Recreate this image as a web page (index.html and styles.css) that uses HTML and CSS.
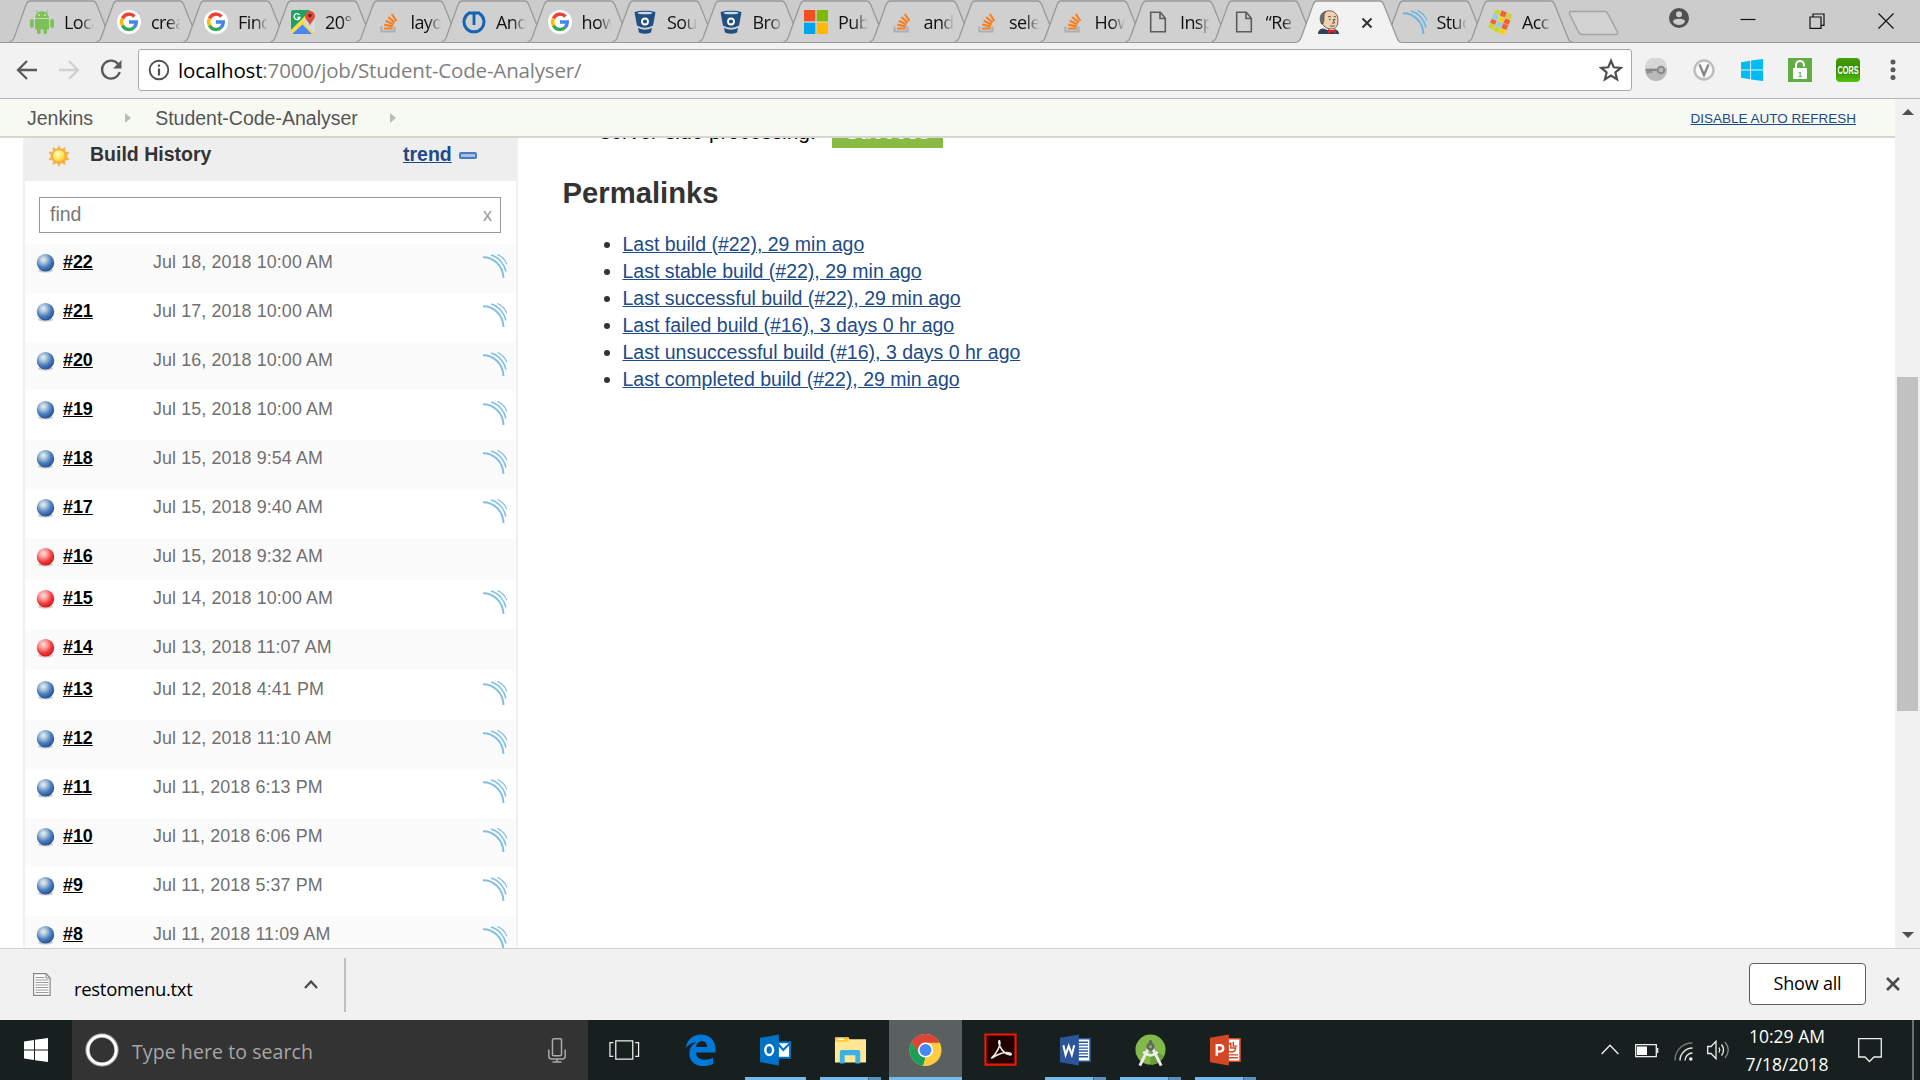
FILE: index.html
```html
<!DOCTYPE html>
<html lang="en">
<head>
<meta charset="utf-8">
<title>Student-Code-Analyser [Jenkins]</title>
<link rel="stylesheet" href="styles.css">
</head>
<body>
<svg class="defs" width="0" height="0" aria-hidden="true">
  <defs>
    <radialGradient id="gBlue" cx=".38" cy=".32" r=".68"><stop offset="0" stop-color="#eef1e4"/><stop offset=".3" stop-color="#a9c3dd"/><stop offset=".65" stop-color="#4c7fbd"/><stop offset="1" stop-color="#24539a"/></radialGradient>
    <radialGradient id="gRed" cx=".38" cy=".32" r=".68"><stop offset="0" stop-color="#ffe1e1"/><stop offset=".35" stop-color="#f99"/><stop offset=".7" stop-color="#f03a3a"/><stop offset="1" stop-color="#d81c1c"/></radialGradient>
    <radialGradient id="gSun" cx=".4" cy=".35" r=".7"><stop offset="0" stop-color="#fffbd0"/><stop offset=".6" stop-color="#ffe34d"/><stop offset="1" stop-color="#f9b82a"/></radialGradient>
    <linearGradient id="gCors" x1="0" y1="0" x2="0" y2="1"><stop offset="0" stop-color="#4a9f07"/><stop offset=".5" stop-color="#2f8a00"/><stop offset="1" stop-color="#55c40a"/></linearGradient>
  </defs>
  <symbol id="tab" viewBox="0 0 106 43"><path d="M0.5 42C4 41 4 40 5 38L17 5Q18.500 1 21 1H84Q86 1 87.500 4L101 38Q102.500 42 105.500 42Z" fill="#d0d0d0"/><path d="M0.5 42C4 41 4 40 5 38L17 5Q18.500 1 21 1H84Q86 1 87.500 4L101 38Q102.500 42 105.500 42" fill="none" stroke="#999" stroke-width="1.300"/></symbol>
  <symbol id="tab-on" viewBox="0 0 106 43"><path d="M0 43V42.500C4 41 4 40 5 38L17 5Q18.500 1 21 1H84Q86 1 87.500 4L101 38Q102.500 42 106 42.500V43Z" fill="#f2f2f2"/><path d="M0.500 42.500C4 41 4 40 5 38L17 5Q18.500 1 21 1H84Q86 1 87.500 4L101 38Q102.500 42 105.500 42.500" fill="none" stroke="#999" stroke-width="1.300"/></symbol>
  <symbol id="android" viewBox="0 0 24 24"><g fill="#7dc257"><path d="M5 8a7 6.800 0 0 1 14 0z"/><path d="M5 9h14v9.500a1 1 0 0 1-1 1H6a1 1 0 0 1-1-1z"/><rect x="0" y="9" width="3.800" height="9" rx="1.900"/><rect x="20.200" y="9" width="3.800" height="9" rx="1.900"/><rect x="7" y="17" width="3.600" height="7" rx="1.500"/><rect x="13.400" y="17" width="3.600" height="7" rx="1.500"/></g><path d="M6.500.5l2 3M17.500.5l-2 3" stroke="#7dc257"/><circle cx="9" cy="5" r=".8" fill="#fff"/><circle cx="15" cy="5" r=".8" fill="#fff"/></symbol>
  <symbol id="google" viewBox="0 0 24 24"><circle cx="12" cy="12" r="12" fill="#fff"/><g fill="none" stroke-width="3.400"><path d="M17.500 6.500A7.300 7.300 0 0 0 5.500 8.500" stroke="#ea4335"/><path d="M5.500 8.500a7.300 7.300 0 0 0 0 7" stroke="#fbbc05"/><path d="M5.500 15.500A7.300 7.300 0 0 0 17 17.500" stroke="#34a853"/><path d="M17 17.500A7.300 7.300 0 0 0 19.300 12H12" stroke="#4285f4"/></g></symbol>
  <symbol id="maps" viewBox="0 0 24 24"><path d="M2 0h17l-17 21H0V2a2 2 0 0 1 2-2z" fill="#1ea362"/><path d="M12 12L24 9V22H12z" fill="#d9d9d9"/><path d="M1 24L12 12.500 23 24z" fill="#4a86f5"/><path d="M0 20L20 0l2 2L12 12.500 24 24h-3L11.500 14.500 1 24H0z" fill="#ffd94a"/><path d="M14 6a5 5 0 0 1 10 0c0 4-4 5-5 10-1-5-5-6-5-10z" fill="#dd4b3e"/><circle cx="19" cy="5.500" r="1.800" fill="#70231c"/><path d="M8.500 4.800A3 3 0 1 0 9 7.500H6.200" fill="none" stroke="#fff" stroke-width="1.300"/></symbol>
  <symbol id="stack" viewBox="0 0 24 24"><path d="M4.500 16.500v5h13v-5" fill="none" stroke="#aab0b7" stroke-width="2.200"/><g stroke="#f48024" stroke-width="2.200"><path d="M7 18.500h8.500M7.300 14.700l8.500 1.800M8.700 10.700l7.800 3.800M11.200 7l6.500 5.600M14.800 4l4.600 7"/></g></symbol>
  <symbol id="power" viewBox="0 0 24 24"><path d="M6.500 3.500a10 10 0 1 0 11 0" fill="none" stroke="#1464b4" stroke-width="3"/><path d="M6 3h12M12 3v12" stroke="#1464b4" stroke-width="2.800"/></symbol>
  <symbol id="bucket" viewBox="0 0 24 24"><path d="M1.500 2.500C2 0 22 0 22.500 2.500L20 15.500Q12 20 4 15.500z" fill="#205081"/><path d="M5 18q7 3.500 14 0l-1 4.500q-6 2.500-12 0z" fill="#205081"/><ellipse cx="12" cy="3" rx="7.500" ry="1.300" fill="#d0d8e0"/><circle cx="12" cy="11.500" r="3" fill="none" stroke="#fff" stroke-width="1.800"/></symbol>
  <symbol id="ms" viewBox="0 0 24 24"><path fill="#f25022" d="M0 0h11.300v11.300H0z"/><path fill="#7fba00" d="M12.700 0H24v11.300H12.700z"/><path fill="#00a4ef" d="M0 12.700h11.300V24H0z"/><path fill="#ffb900" d="M12.700 12.700H24V24H12.700z"/></symbol>
  <symbol id="page" viewBox="0 0 24 24"><path d="M4.700 2.200h9.600l5 6v13.600H4.700zM14 2.500v6h5" fill="none" stroke="#5c5c5c" stroke-width="1.600"/></symbol>
  <symbol id="butler" viewBox="0 0 24 24"><path d="M1 24q0-5 5-5.500l6 2 6-1q4 .5 4 4.500z" fill="#2c4256"/><path d="M7 17l5 4 6-2v-4H7z" fill="#fff"/><path d="M5 8C5 3 8 .8 12.500 .8S21 4 21 10.500c0 5-2 8.500-6.500 8.500-5 0-9-3-9.500-7z" fill="#efd0b0" stroke="#4a4038" stroke-width=".8"/><path d="M4.500 14C2 9 3 4 7 2l2-.8Q6.500 4 7 7t-1 7z" fill="#6f6b66" stroke="#4a4038" stroke-width=".6"/><path d="M11 7q1.500-1 3 0m2.500 0q1.500-1 2.500 0M12 9.500h1.500m3.500 0h1.500M16 9l1.500 4h-2.500m-2 2.800q2.500 .8 4.500 0" stroke="#4a4038" fill="none" stroke-width=".9"/><path d="M11 19l4 1.500 4-1.500v4.500L15 22l-4 1.800z" fill="#e01f26"/></symbol>
  <symbol id="sonar" viewBox="0 0 24 24"><g fill="none" stroke="#6cb4e0"><path d="M0 3.200C10 3 20 11 20.500 24" stroke-width="2"/><path d="M8 1C15.500 3 21.500 10 23 17.500" stroke-width="1.500"/><path d="M14.500.4C19 2.500 22.500 6.500 24 10.500" stroke-width="1.200"/></g></symbol>
  <symbol id="mosaic" viewBox="0 0 24 24"><g transform="rotate(22 12 12)"><path fill="#cdd62c" d="M3 .5h5.500V6H3zM3 17h5.500v4.500H3z"/><path fill="#f4632a" d="M9.300.5h5.500V6H9.300zM15.500 12H21v5h-5.500zM3 12h5.500v4.500H3z"/><path fill="#cdd62c" d="M15.500.5H21v5h-5.500z"/><path fill="#8fd0e4" d="M3 6.500h5.500v5H3zM9.300 12h5.500v5H9.300z"/><path fill="#fbd00c" d="M9.300 6.500h5.500v5H9.300zM15.500 17.500H21v5h-5.500z"/><path fill="#f4632a" d="M15.500 6.500H21v5h-5.500z"/><path fill="#cdd62c" d="M9.300 17.500h5.500v5H9.300z"/></g></symbol>
  <symbol id="winflag" viewBox="0 0 24 24"><path d="M0 3.500L10 2v9.500H0zM11 1.800L24 0v11.500H11zM0 12.500h10V22L0 20.500zM11 12.500h13V24l-13-1.800z"/></symbol>
  <symbol id="blue" viewBox="0 0 20 20"><ellipse cx="10" cy="18" rx="8" ry="2" fill="#ccc"/><circle cx="10" cy="9.700" r="9.200" fill="url(#gBlue)"/></symbol>
  <symbol id="red" viewBox="0 0 20 20"><ellipse cx="10" cy="18" rx="8" ry="2" fill="#ccc"/><circle cx="10" cy="9.700" r="9.200" fill="url(#gRed)"/></symbol>
  <symbol id="sun" viewBox="0 0 22 22"><path d="M11 0l2 4 4.500-2L17 6.500l4.500.5-2.500 4 2.500 4-4.500.5.500 4.500-4.500-2-2 4-2-4-4.500 2L5 15.500.5 15 3 11 .5 7 5 6.500 4.500 2 9 4z" fill="#f7b253"/><circle cx="11" cy="11" r="6.500" fill="url(#gSun)" stroke="#f5a73b"/></symbol>
</svg>

<header class="tabstrip">
  <nav class="tabs">
    <div class="tab wide"><svg class="shape"><use href="#tab"/></svg><svg class="fav"><use href="#android"/></svg><span>Loca</span></div>
    <div class="tab wide"><svg class="shape"><use href="#tab"/></svg><svg class="fav"><use href="#google"/></svg><span>crea</span></div>
    <div class="tab wide"><svg class="shape"><use href="#tab"/></svg><svg class="fav"><use href="#google"/></svg><span>Find</span></div>
    <div class="tab"><svg class="shape"><use href="#tab"/></svg><svg class="fav"><use href="#maps"/></svg><span>20°</span></div>
    <div class="tab"><svg class="shape"><use href="#tab"/></svg><svg class="fav"><use href="#stack"/></svg><span>layo</span></div>
    <div class="tab"><svg class="shape"><use href="#tab"/></svg><svg class="fav"><use href="#power"/></svg><span>And</span></div>
    <div class="tab"><svg class="shape"><use href="#tab"/></svg><svg class="fav"><use href="#google"/></svg><span>how</span></div>
    <div class="tab"><svg class="shape"><use href="#tab"/></svg><svg class="fav"><use href="#bucket"/></svg><span>Sou</span></div>
    <div class="tab"><svg class="shape"><use href="#tab"/></svg><svg class="fav"><use href="#bucket"/></svg><span>Bro</span></div>
    <div class="tab"><svg class="shape"><use href="#tab"/></svg><svg class="fav"><use href="#ms"/></svg><span>Pub</span></div>
    <div class="tab"><svg class="shape"><use href="#tab"/></svg><svg class="fav"><use href="#stack"/></svg><span>and</span></div>
    <div class="tab"><svg class="shape"><use href="#tab"/></svg><svg class="fav"><use href="#stack"/></svg><span>sele</span></div>
    <div class="tab"><svg class="shape"><use href="#tab"/></svg><svg class="fav"><use href="#stack"/></svg><span>How</span></div>
    <div class="tab"><svg class="shape"><use href="#tab"/></svg><svg class="fav"><use href="#page"/></svg><span>Insp</span></div>
    <div class="tab"><svg class="shape"><use href="#tab"/></svg><svg class="fav"><use href="#page"/></svg><span>“Re</span></div>
    <div class="tab active"><svg class="shape"><use href="#tab-on"/></svg><svg class="fav"><use href="#butler"/></svg><svg class="tabx" viewBox="0 0 12 12"><path d="M1.500 1.500l9 9m0-9l-9 9" stroke="#333" stroke-width="2"/></svg></div>
    <div class="tab"><svg class="shape"><use href="#tab"/></svg><svg class="fav"><use href="#sonar"/></svg><span>Stud</span></div>
    <div class="tab"><svg class="shape"><use href="#tab"/></svg><svg class="fav"><use href="#mosaic"/></svg><span>Acc</span></div>
  </nav>
  <svg class="newtab" viewBox="0 0 52 26"><path d="M3 1.500H37Q39 1.500 40 4L49.500 22Q50 24.500 48 24.500H14Q11.500 24.500 10.500 22L1.500 4Q1 1.500 3 1.500z" fill="#d2d2d2" stroke="#a3a3a3" stroke-width="1.500"/></svg>
  <div class="winctl">
    <svg class="user" viewBox="0 0 20 20"><circle cx="10" cy="10" r="10" fill="#505050"/><circle cx="10" cy="6.200" r="3" fill="#ccc"/><path d="M4 13.800q0-3 6-3t6 3q-2 3.200-6 3.200t-6-3.200z" fill="#ccc"/></svg>
    <svg viewBox="0 0 16 16"><path d="M.5 6.500h15" stroke="#111" stroke-width="1.200"/></svg>
    <svg viewBox="0 0 16 16"><path d="M1 4h11v11.400H1zM4 4V1h11v11.400h-3" fill="none" stroke="#111" stroke-width="1.200"/></svg>
    <svg viewBox="0 0 16 16"><path d="M.5.5l15 15m0-15l-15 15" stroke="#111" stroke-width="1.200"/></svg>
  </div>
</header>

<div class="toolbar">
  <svg class="back" viewBox="0 0 22 22"><path d="M21 11H2.500M11 2l-9 9 9 9" fill="none" stroke="#5a5a5a" stroke-width="2.300"/></svg>
  <svg class="fwd" viewBox="0 0 22 22"><path d="M1 11h18.500M11 2l9 9-9 9" fill="none" stroke="#d0d0d0" stroke-width="2.300"/></svg>
  <svg class="reload" viewBox="0 0 22 22"><path d="M18.500 5.500A9 9 0 1 0 19.700 13" fill="none" stroke="#5a5a5a" stroke-width="2.300"/><path d="M21.500 1v8.500h-8.500z" fill="#5a5a5a"/></svg>
  <div class="omnibox">
    <svg class="info" viewBox="0 0 22 22"><circle cx="11" cy="11" r="9.300" fill="none" stroke="#505050" stroke-width="1.900"/><path d="M11 9.500v7M11 5.500v2.200" stroke="#505050" stroke-width="2.200"/></svg>
    <p class="url"><b>localhost</b>:7000/job/Student-Code-Analyser/</p>
    <svg class="star" viewBox="0 0 22 22"><path d="M11 2.500l2.500 6 6.500.5-5 4.300 1.600 6.300L11 16.100l-5.600 3.500L7 13.300 2 9l6.500-.5z" fill="none" stroke="#505050" stroke-width="2"/></svg>
  </div>
  <div class="exts">
    <svg viewBox="0 0 24 24"><circle cx="12" cy="12" r="11" fill="#b9b9b9"/><path d="M1 10a11 11 0 0 1 22 0z" fill="#d6d6d6"/><path d="M2 12h12M4 12v3.500M7 12v3" stroke="#888" stroke-width="2.200"/><circle cx="17" cy="12" r="3.300" fill="none" stroke="#888" stroke-width="2"/></svg>
    <svg viewBox="0 0 24 24"><circle cx="12" cy="12" r="9.500" fill="#f8f8f8" stroke="#bdbdbd" stroke-width="2.400"/><path d="M7.500 6.500L12 17l4.500-10.500" fill="none" stroke="#858585" stroke-width="2.300"/></svg>
    <svg class="azure" viewBox="-1 -1 26 26"><use href="#winflag" width="24" height="24"/></svg>
    <svg viewBox="0 0 24 24"><path fill="#62ad44" d="M0 0h24v24H0z"/><rect x="5" y="10" width="14" height="11" rx="1" fill="#fff"/><path d="M8 11V7a4 4 0 0 1 8 0v1.500" fill="none" stroke="#fff" stroke-width="2"/><text x="12" y="19" class="lock1">1</text></svg>
    <svg viewBox="0 0 24 24"><rect width="24" height="24" rx="4" fill="url(#gCors)"/><text x="12" y="16" class="cors" textLength="21" lengthAdjust="spacingAndGlyphs">CORS</text></svg>
  </div>
  <svg class="dots" viewBox="0 0 6 22"><circle cx="3" cy="3" r="2.500"/><circle cx="3" cy="10.800" r="2.500"/><circle cx="3" cy="18.600" r="2.500"/></svg>
</div>

<div class="viewport">
  <div class="page">
    <div class="crumbs">
      <a>Jenkins</a><i></i><a>Student-Code-Analyser</a><i></i>
      <a class="auto">DISABLE AUTO REFRESH</a>
    </div>
    <div class="content">
      <aside class="history">
        <div class="hhead"><svg class="sun"><use href="#sun"/></svg><b>Build History</b><a>trend</a><span class="pill"></span></div>
        <div class="find"><span>find</span><em>x</em></div>
        <div class="row"><svg class="ball"><use href="#blue"/></svg><a>#22</a><time>Jul 18, 2018 10:00 AM</time><svg class="wave"><use href="#sonar"/></svg></div>
        <div class="row"><svg class="ball"><use href="#blue"/></svg><a>#21</a><time>Jul 17, 2018 10:00 AM</time><svg class="wave"><use href="#sonar"/></svg></div>
        <div class="row"><svg class="ball"><use href="#blue"/></svg><a>#20</a><time>Jul 16, 2018 10:00 AM</time><svg class="wave"><use href="#sonar"/></svg></div>
        <div class="row"><svg class="ball"><use href="#blue"/></svg><a>#19</a><time>Jul 15, 2018 10:00 AM</time><svg class="wave"><use href="#sonar"/></svg></div>
        <div class="row"><svg class="ball"><use href="#blue"/></svg><a>#18</a><time>Jul 15, 2018 9:54 AM</time><svg class="wave"><use href="#sonar"/></svg></div>
        <div class="row"><svg class="ball"><use href="#blue"/></svg><a>#17</a><time>Jul 15, 2018 9:40 AM</time><svg class="wave"><use href="#sonar"/></svg></div>
        <div class="row short"><svg class="ball"><use href="#red"/></svg><a>#16</a><time>Jul 15, 2018 9:32 AM</time></div>
        <div class="row"><svg class="ball"><use href="#red"/></svg><a>#15</a><time>Jul 14, 2018 10:00 AM</time><svg class="wave"><use href="#sonar"/></svg></div>
        <div class="row short"><svg class="ball"><use href="#red"/></svg><a>#14</a><time>Jul 13, 2018 11:07 AM</time></div>
        <div class="row"><svg class="ball"><use href="#blue"/></svg><a>#13</a><time>Jul 12, 2018 4:41 PM</time><svg class="wave"><use href="#sonar"/></svg></div>
        <div class="row"><svg class="ball"><use href="#blue"/></svg><a>#12</a><time>Jul 12, 2018 11:10 AM</time><svg class="wave"><use href="#sonar"/></svg></div>
        <div class="row"><svg class="ball"><use href="#blue"/></svg><a>#11</a><time>Jul 11, 2018 6:13 PM</time><svg class="wave"><use href="#sonar"/></svg></div>
        <div class="row"><svg class="ball"><use href="#blue"/></svg><a>#10</a><time>Jul 11, 2018 6:06 PM</time><svg class="wave"><use href="#sonar"/></svg></div>
        <div class="row"><svg class="ball"><use href="#blue"/></svg><a>#9</a><time>Jul 11, 2018 5:37 PM</time><svg class="wave"><use href="#sonar"/></svg></div>
        <div class="row"><svg class="ball"><use href="#blue"/></svg><a>#8</a><time>Jul 11, 2018 11:09 AM</time><svg class="wave"><use href="#sonar"/></svg></div>
      </aside>
      <main>
        <p class="gate"><span>server-side processing:</span><b>Success</b></p>
        <h2>Permalinks</h2>
        <ul>
          <li><a>Last build (#22), 29 min ago</a></li>
          <li><a>Last stable build (#22), 29 min ago</a></li>
          <li><a>Last successful build (#22), 29 min ago</a></li>
          <li><a>Last failed build (#16), 3 days 0 hr ago</a></li>
          <li><a>Last unsuccessful build (#16), 3 days 0 hr ago</a></li>
          <li><a>Last completed build (#22), 29 min ago</a></li>
        </ul>
      </main>
    </div>
  </div>
  <div class="scroll"><svg viewBox="0 0 12 6"><path d="M6 0l6 6H0z"/></svg><span></span><svg viewBox="0 0 12 6"><path d="M0 0h12L6 6z"/></svg></div>
</div>

<div class="shelf">
  <svg class="doc" viewBox="0 0 18 23"><path d="M.6.6h12.500l4 4.400v17.300H.6z" fill="#fff" stroke="#888" stroke-width="1.200"/><path d="M13 .6V5h4" fill="none" stroke="#888"/><path d="M2.500 4.500h9M2.500 7h13M2.500 9.500h13M2.500 12h13M2.500 14.500h13M2.500 17h13M2.500 19.500h13" stroke="#999" stroke-width="1.100"/></svg>
  <span class="fname">restomenu.txt</span>
  <svg class="up" viewBox="0 0 14 9"><path d="M1 8l6-6.500L13 8" fill="none" stroke="#4a4a4a" stroke-width="2.300"/></svg>
  <span class="sep"></span>
  <button>Show all</button>
  <svg class="sx" viewBox="0 0 14 14"><path d="M1 1l12 12m0-12L1 13" stroke="#4a4a4a" stroke-width="2.500"/></svg>
</div>

<footer class="taskbar">
  <div class="start"><svg viewBox="0 0 24 24"><use href="#winflag"/></svg></div>
  <div class="search">
    <svg class="ring" viewBox="0 0 34 34"><circle cx="17" cy="17" r="14.500" fill="none" stroke="#8e8e8e" stroke-width="4.500"/><circle cx="17" cy="17" r="14.200" fill="none" stroke="#fff" stroke-width="3"/></svg>
    <span>Type here to search</span>
    <svg class="mic" viewBox="0 0 18 25"><rect x="4.500" y=".8" width="9" height="17" rx="1" fill="none" stroke="#aaa" stroke-width="1.500"/><path d="M.8 11.500V18q0 3 3 3h10.400q3 0 3-3v-6.500M9 21v3M4.500 24h9" fill="none" stroke="#aaa" stroke-width="1.500"/></svg>
  </div>
  <div class="apps">
    <div class="app"><svg viewBox="0 0 34 34"><path d="M8 7.500h17.500v19H8zM5.500 9.500H2v14h3.500M28 9.500h3.500v14H28" fill="none" stroke="#eee" stroke-width="1.300"/></svg></div>
    <div class="app"><svg viewBox="0 0 34 34"><path d="M1.800 15C3 6 9.500 1 17.500 1 27 1 32.500 8 32.500 16v3.500H12.300c.3 5 4.500 7.500 9.300 7.500 3.200 0 6-.8 8.400-2.300v6.800C27 33 23.500 33.600 20 33.600 11.500 33.600 5.500 28.500 5.500 20.500c0-5.500 3-9.500 7.500-11.500C9 8.900 4.500 11.500 1.800 15zM12.500 13.800h11.200c0-3-1.500-5.800-5.300-5.800-3.500 0-5.500 2.600-5.900 5.800z" fill="#0078d7"/></svg></div>
    <div class="app run"><svg viewBox="0 0 34 34"><path fill="#fff" stroke="#0072c6" stroke-width="2" d="M19 9h13v16H19z"/><path d="M19 10l6 7 7-7" fill="none" stroke="#0072c6" stroke-width="2.200"/><path d="M1 4.500L20.500 1v32L1 29.500z" fill="#0072c6"/><ellipse cx="10.500" cy="17" rx="4" ry="5.200" fill="none" stroke="#fff" stroke-width="2.500"/></svg></div>
    <div class="app run multi"><svg viewBox="0 0 34 34"><path d="M1 4h14l1 2h17v24H1z" fill="#ffe796"/><path d="M1 4h14v4.500H1z" fill="#fccb2f"/><path d="M4 6h6" stroke="#fff" stroke-width="1.500"/><path d="M6 31V19a2 2 0 0 1 2-2h17a2 2 0 0 1 2 2v12h-5v-8.500H11V31z" fill="#39b2ea"/></svg></div>
    <div class="app chrome"><svg viewBox="0 0 34 34"><circle cx="17" cy="17" r="16.500" fill="#ffcd40"/><path d="M2.700 8.800A16.500 16.500 0 0 1 31.700 9.500H17L10 21z" fill="#db4437"/><path d="M2.700 8.800L10.500 21 17 24.500l-2.500 8.800A16.500 16.500 0 0 1 2.700 8.800z" fill="#1ba05a"/><path d="M23.500 20.500L17 33.500h-2l2-9z" fill="#ffcd40"/><circle cx="17" cy="17" r="7.800" fill="#fff"/><circle cx="17" cy="17" r="6.200" fill="#4587f3"/></svg></div>
    <div class="app"><svg viewBox="0 0 34 34"><path d="M1.500 1h31v31h-31z" fill="#230000" stroke="#f01800" stroke-width="2.200"/><path d="M7.500 25.500C12 22 18 12 16 7.500c-2.500-1 1 13 10.500 14.500 4.500.3 0-4-9-1.500-5 1.500-10 5-10 5z" fill="none" stroke="#eee" stroke-width="1.600"/></svg></div>
    <div class="app run multi"><svg viewBox="0 0 34 34"><path d="M18 5.500h14v23H18z" fill="#fff" stroke="#2b579a" stroke-width="1.600"/><path d="M20 9h10M20 12h10M20 15h10M20 18h10M20 21h10M20 24h10" stroke="#2b579a" stroke-width="1.400"/><path d="M1 4.500L20.500 1v32L1 29.500z" fill="#2b579a"/><path d="M4.500 12l2.300 10 3.200-9 3.200 9 2.500-10" fill="none" stroke="#fff" stroke-width="2.100"/></svg></div>
    <div class="app run multi"><svg viewBox="0 0 34 34"><circle cx="17" cy="16.500" r="15.500" fill="#83b84a"/><path d="M17 13L31 24q-6 9-14 8z" fill="#6a9e3b"/><path d="M15.500 14L6 33M18.500 14L28 33" stroke="#eee" stroke-width="3"/><path d="M9.500 19q7.500 7 15 0" fill="none" stroke="#eee" stroke-width="2.600"/><path d="M15.500 7h3v4h-3z" fill="#666"/><circle cx="17" cy="13.500" r="3" fill="#83b84a" stroke="#666" stroke-width="2.500"/></svg></div>
    <div class="app run multi"><svg viewBox="0 0 34 34"><path d="M18 5.500h14v23H18z" fill="#fff" stroke="#d24726" stroke-width="1.600"/><path d="M22.500 10a4.500 4.500 0 1 0 5 5h-5zM25 8.500v4.500h4" fill="none" stroke="#d24726" stroke-width="1.500"/><path d="M20 22h10M20 25h10" stroke="#d24726" stroke-width="1.500"/><path d="M1 4.500L20.500 1v32L1 29.500z" fill="#d24726"/><path d="M8 23V12h3q3.700 0 3.700 3.300T11 18.600H8" fill="none" stroke="#fff" stroke-width="2.400"/></svg></div>
  </div>
  <div class="tray">
    <svg class="t1" viewBox="0 0 18 11"><path d="M.6 10L9 1.200 17.400 10" fill="none" stroke="#eee" stroke-width="1.400"/></svg>
    <svg class="t2" viewBox="0 0 24 14"><path d="M.7.7h20.600v12H.7zM22.700 4v5" fill="none" stroke="#eee" stroke-width="1.300"/><path d="M2 2.500h10v8.500H2z" fill="#fff"/></svg>
    <svg class="t3" viewBox="0 0 20 20"><g fill="none" stroke-width="1.400"><path d="M1 18.500A17 17 0 0 1 18.500 1" stroke="#777"/><path d="M6 18.500A12.500 12.500 0 0 1 18.500 6M11 18.500A7.500 7.500 0 0 1 18.500 11" stroke="#e8e8e8"/></g><circle cx="16.800" cy="17" r="1.700" fill="#fff"/></svg>
    <svg class="t4" viewBox="0 0 22 20"><path d="M.7 6.500h3.300l5-5.200v17.400l-5-5.200H.7z" fill="none" stroke="#eee" stroke-width="1.300"/><path d="M12 7.500q1.500 2.500 0 5M14.500 4.500q4 5.500 0 11" fill="none" stroke="#eee" stroke-width="1.300"/><path d="M18 2q6.500 8 0 16" fill="none" stroke="#888" stroke-width="1.300"/></svg>
    <div class="clock"><span>10:29 AM</span><span>7/18/2018</span></div>
    <svg class="t5" viewBox="0 0 24 25"><path d="M.7.700h22.600v18.300H16l-4.500 4.500L7 19H.7z" fill="none" stroke="#eee" stroke-width="1.300"/></svg>
    <span class="peek"></span>
  </div>
</footer>
</body>
</html>
```

FILE: styles.css
```css
* { box-sizing: border-box; margin: 0; padding: 0; }
body { width: 1920px; height: 1080px; overflow: hidden; display: flex; flex-direction: column; background: #fff; font-family: "Liberation Sans", Arial, sans-serif; font-size: 19.5px; color: #333; }
svg { display: block; flex: none; }
.defs { position: absolute; }

/* Tab strip */
.tabstrip { height: 43px; flex: none; display: flex; background: linear-gradient(#999, #999) 0 42px / 100% 1px no-repeat #ccc; font-family: "Open Sans", "Noto Sans", sans-serif; }
.tabs { display: flex; padding-left: 9px; isolation: isolate; }
.tab { position: relative; width: 106px; height: 43px; margin-right: -20.500px; display: flex; align-items: center; padding-left: 21px; z-index: 1; }
.tab.wide { margin-right: -19px; }
.tab.active { z-index: 3; }
.tab .shape { position: absolute; left: 0; top: 0; width: 106px; height: 43px; z-index: -1; }
.tab .fav { width: 24px; height: 24px; margin-top: 1px; }
.tab span { width: 30px; margin-left: 10px; overflow: hidden; white-space: nowrap; font-size: 18px; letter-spacing: -.6px; color: #111; line-height: 26px; -webkit-mask-image: linear-gradient(90deg, #000 55%, transparent 100%); mask-image: linear-gradient(90deg, #000 55%, transparent 100%); }
.tabx { width: 12px; height: 12px; margin: 2px 0 0 20px; }
.newtab { width: 52px; height: 26px; margin: 10px 0 0 15px; }
.winctl { display: flex; margin-left: auto; padding: 13px 26px 0 0; gap: 53px; }
.winctl svg { width: 16px; height: 16px; }
.winctl .user { width: 20px; height: 20px; margin: -5px -2px 0 0; }

/* Toolbar */
.toolbar { height: 56px; flex: none; display: flex; align-items: center; background: #f2f2f2; border-bottom: 1px solid #b6b4b6; padding: 0 0 1px 16px; }
.toolbar > svg { width: 22px; height: 22px; }
.fwd { margin-left: 20px; }
.reload { margin-left: 20px; }
.omnibox { width: 1494px; height: 42px; margin-left: 16px; border: 1px solid #a9a9a9; border-radius: 3px; background: #fff; display: flex; align-items: center; padding-left: 9px; }
.info { width: 22px; height: 22px; }
.star { width: 24px; height: 24px; margin-left: auto; margin-right: 8px; }
.url { margin: -1px 0 0 8px; font-family: "Open Sans", "Noto Sans", sans-serif; font-size: 20.500px; letter-spacing: -.170px; color: #808080; white-space: nowrap; }
.url b { font-weight: 400; color: #000; }
.exts { display: flex; gap: 24px; margin-left: 12px; }
.exts svg { width: 24px; height: 24px; }
.azure { fill: #00bcf2; }
.lock1 { font: bold 8px "Liberation Sans", sans-serif; fill: #62ad44; text-anchor: middle; }
.cors { font: bold 11px "Liberation Sans", sans-serif; fill: #fff; text-anchor: middle; }
.toolbar .dots { width: 6px; margin-left: 30px; fill: #5a5a5a; }

/* Page */
.viewport { height: 849px; flex: none; display: flex; }
.page { width: 1895px; height: 849px; overflow: hidden; display: flex; flex-direction: column; }
.crumbs { height: 39px; flex: none; display: flex; align-items: center; padding: 1px 39px 0 27px; background: #f6faf2; border-bottom: 2px solid #d3d7cf; color: #555; }
.crumbs i { margin: 0 24px 0 32px; border-left: 6px solid #bbb; border-top: 5px solid transparent; border-bottom: 5px solid transparent; }
.crumbs .auto { margin-left: auto; font-size: 13.500px; }
.auto, main a, .hhead a { color: #204a87; text-decoration: underline; }
.content { flex: 1; min-height: 0; display: flex; overflow: hidden; }
.history { width: 495px; margin-left: 23px; flex: none; height: 1000px; border: solid #f0f0f0; border-width: 0 2px; }
.hhead { height: 43px; background: #eee; display: flex; align-items: center; padding: 0 0 11px 23px; }
.sun { width: 22px; height: 22px; margin-top: 4px; }
.hhead b { margin-left: 20px; width: 313px; }
.hhead a { font-weight: bold; width: 56px; }
.pill { width: 18px; height: 7px; margin-top: 3px; border: 2px solid #4c7abf; border-radius: 2px; background: #a4c0e4; }
.find { height: 36px; margin: 16px 15px 11px 14px; border: 1px solid #999; display: flex; align-items: center; justify-content: space-between; padding: 0 8px 2px 10px; color: #777; }
.find em { font-style: normal; font-size: 18px; color: #999; padding-top: 3px; }
.row { height: 49px; display: flex; align-items: flex-start; padding: 8px 9px 0 10.500px; font-size: 17.875px; line-height: 20px; }
.row.short { height: 42px; }
.row:nth-child(odd) { background: #fbfbfb; }
.row a { width: 90px; margin-left: 8.500px; color: #000; font-weight: bold; text-decoration: underline; }
.row time { color: #707070; letter-spacing: .110px; }
.ball { width: 19px; height: 20px; margin-top: 1px; }
.wave { width: 24px; height: 24px; margin: 2px 0 0 auto; opacity: .85; }
main { flex: 1; padding-left: 44.500px; }
.gate { display: flex; align-items: flex-start; height: 29px; margin: -19px 0 0 37.500px; font-size: 21px; line-height: 25px; color: #000; white-space: nowrap; }
.gate span { width: 232px; letter-spacing: -.060px; }
.gate b { width: 111px; height: 29px; background: #8b4; color: #fff; text-align: center; font-weight: 400; letter-spacing: .8px; }
h2 { margin-top: 27px; font-size: 29.250px; line-height: 36px; }
ul { margin: 20px 0 0 60px; line-height: 27px; }

.scroll { width: 25px; background: #f1f1f1; display: flex; flex-direction: column; align-items: center; padding: 10px 0 10px; }
.scroll svg { width: 12px; height: 6px; fill: #505050; }
.scroll span { width: 21px; height: 334px; margin: 262px 0 auto; background: #c1c1c1; }

/* Download shelf */
.shelf { height: 72px; flex: none; display: flex; align-items: center; background: #f1f1f1; border-top: 1px solid #d0d0d0; padding: 0 0 1px 33px; font-family: "Open Sans", "Noto Sans", sans-serif; font-size: 18.500px; color: #000; }
.doc { width: 18px; height: 23px; }
.fname { width: 229px; margin: 8px 0 0 23px; letter-spacing: -.3px; }
.up { width: 14px; height: 9px; margin: 1px 0 0 1px; }
.sep { width: 2px; height: 54px; margin: 1px 0 0 26px; background: #c0c0c0; }
.shelf button { width: 117px; height: 42px; margin-left: auto; border: 1px solid #5f5f5f; border-radius: 4px; background: #fff; padding-bottom: 2px; font: 500 18px "Open Sans", "Noto Sans", sans-serif; letter-spacing: -.2px; color: #000; }
.sx { width: 14px; height: 14px; margin: 0 20px; }

/* Taskbar */
.taskbar { height: 60px; flex: none; display: flex; background: #17201e; color: #fff; font-family: "Open Sans", "Noto Sans", sans-serif; }
.start { width: 72px; display: flex; align-items: center; justify-content: center; fill: #fff; }
.start svg { width: 24px; height: 24px; }
.search { width: 516px; background: #333; display: flex; align-items: center; padding: 0 22px 0 13px; }
.ring { width: 34px; height: 34px; }
.search span { margin: 2px auto 0 13px; font-size: 19.500px; letter-spacing: .080px; color: #a6a6a6; }
.mic { width: 18px; height: 25px; }
.apps { display: flex; gap: 2px; }
.app { width: 73px; display: flex; justify-content: center; padding-top: 13px; }
.app:first-child { width: 73px; margin-right: 1px; }
.app svg { width: 33px; height: 34px; }
.app.run { background: linear-gradient(#76b9ed, #76b9ed) 6px 57px / 61px 3px no-repeat; }
.app.multi { background: linear-gradient(90deg, #76b9ed 48px, #4a6f8c 48px, #4a6f8c 49px, #5a90bd 49px) 6px 57px / 61px 3px no-repeat; }
.app.chrome { background: linear-gradient(#76b9ed, #76b9ed) 0 57px / 73px 3px no-repeat #5a605f; }
.tray { display: flex; margin-left: auto; align-items: flex-start; }
.t1 { width: 18px; height: 11px; margin: 24px 16px 0 0; }
.t2 { width: 24px; height: 14px; margin: 24px 15px 0 0; }
.t3 { width: 20px; height: 20px; margin: 22px 13px 0 0; }
.t4 { width: 22px; height: 20px; margin: 20px 15px 0 0; }
.clock { width: 86px; display: flex; flex-direction: column; align-items: center; font-size: 17.500px; line-height: 28px; padding-top: 2px; letter-spacing: 0; }
.t5 { width: 24px; height: 25px; margin: 18px 30px 0 28px; }
.peek { width: 2px; height: 60px; margin-right: 6px; background: #6b706f; }
```
